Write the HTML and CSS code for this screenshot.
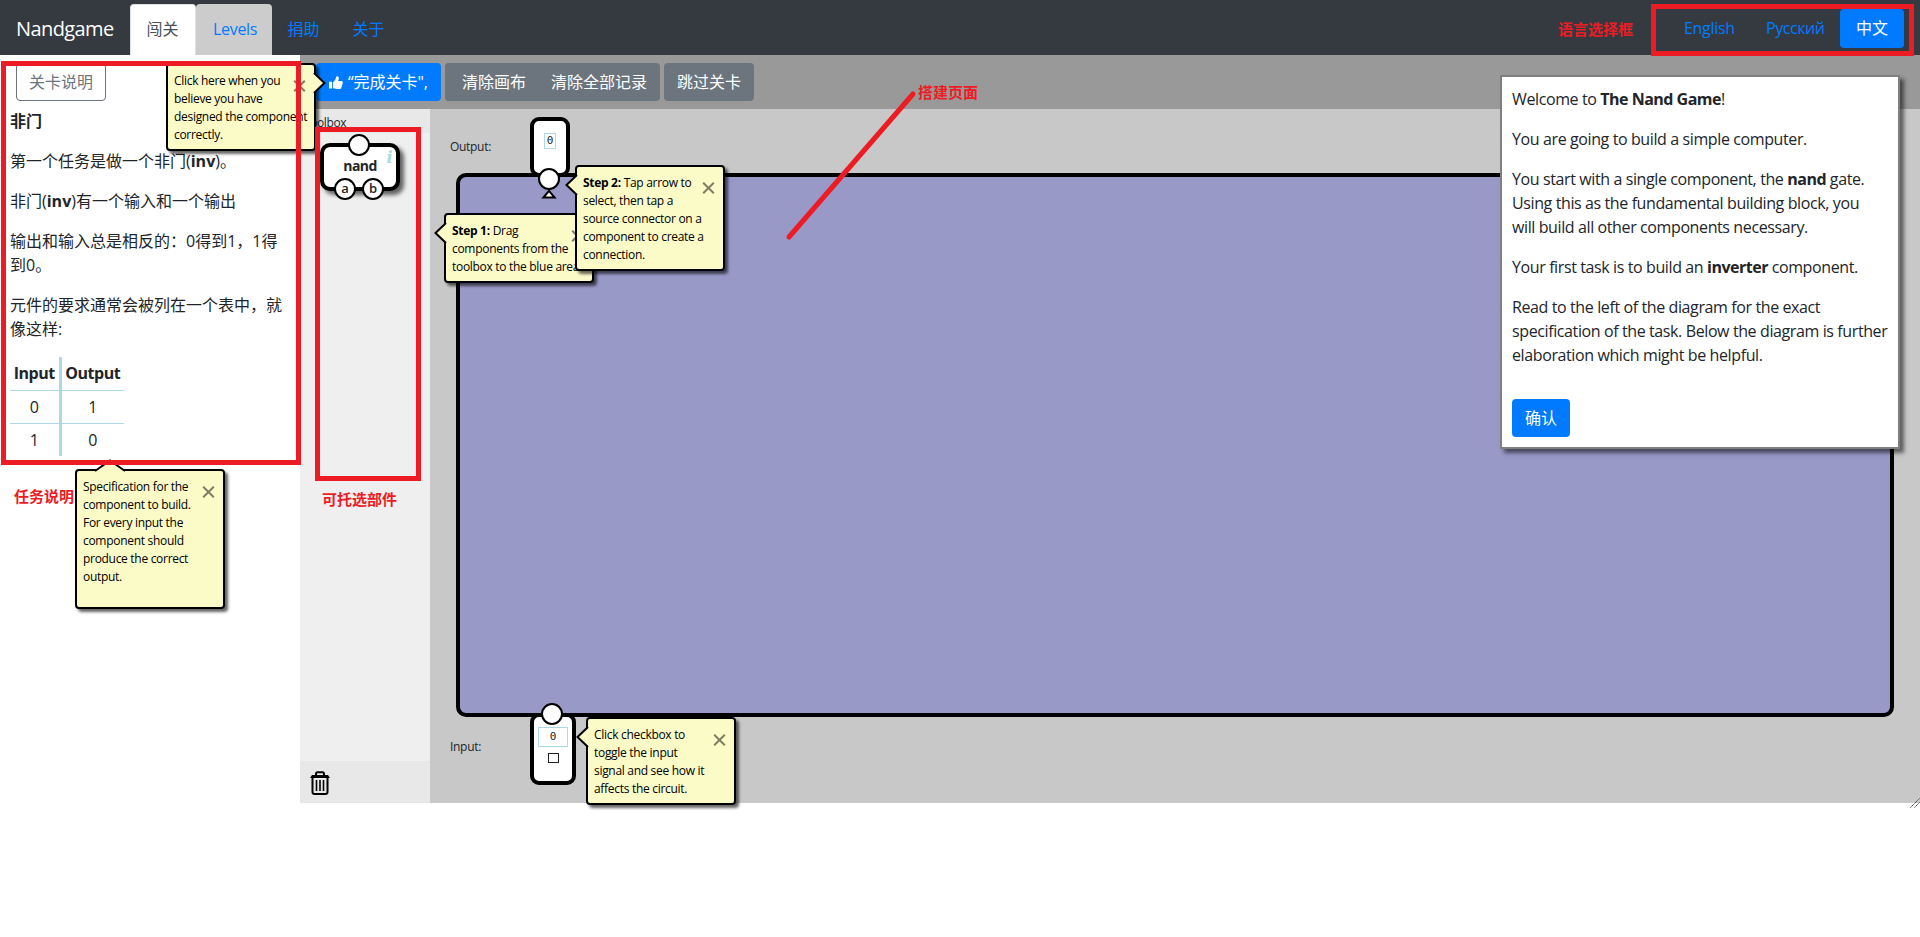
FILE: index.html
```html
<!DOCTYPE html>
<html lang="zh">
<head>
<meta charset="utf-8">
<title>Nandgame</title>
<link rel="stylesheet" href="styles.css">
</head>
<body>
<nav class="navbar">
  <div class="brand">Nandgame</div>
  <div class="tabs">
    <a class="tab tab-active">闯关</a>
    <a class="tab tab-levels">Levels</a>
    <a class="tab">捐助</a>
    <a class="tab">关于</a>
  </div>
  <div class="langs">
    <a class="lang">English</a>
    <a class="lang lang-ru">Русский</a>
    <a class="lang lang-active">中文</a>
  </div>
</nav>

<main class="main">
  <section class="spec">
    <button class="btn btn-outline">关卡说明</button>
    <h4 class="spec-title">非门</h4>
    <p>第一个任务是做一个非门(<b>inv</b>)。</p>
    <p>非门(<b>inv</b>)有一个输入和一个输出</p>
    <p>输出和输入总是相反的：0得到1，1得<br>到0。</p>
    <p>元件的要求通常会被列在一个表中，就<br>像这样:</p>
    <table class="truth">
      <tr><th>Input</th><th>Output</th></tr>
      <tr><td>0</td><td>1</td></tr>
      <tr><td>1</td><td>0</td></tr>
    </table>
  </section>

  <section class="game">
    <div class="toolbar">
      <button class="btn btn-primary btn-done"><svg class="thumb" viewBox="0 0 16 16"><path d="M0 7h3.6v8H0zM4.6 7.4C6 6.600 7.300 4.800 7.800 3.300 8.100 2.200 8 .8 9.300.8c1.500 0 2.200 1.200 2.100 2.600-.1 1.100-.7 2-.9 2.900H14c1.100 0 2 .8 2 1.800 0 .7-.3 1.200-.7 1.500.3.900.100 1.700-.5 2.200.1.800-.1 1.400-.6 1.900.1 1.200-.9 1.800-2.400 1.800-3.200 0-4.700-.9-7.200-1z"/></svg><span>“完成关卡",</span></button>
      <div class="group">
        <button class="btn btn-grey">清除画布</button>
        <button class="btn btn-grey">清除全部记录</button>
      </div>
      <button class="btn btn-grey">跳过关卡</button>
    </div>
    <div class="workspace">
      <aside class="toolbox">
        <div class="toolbox-head">Toolbox</div>
        <div class="toolbox-body">
          <div class="nand">
            <span class="pin pin-top"></span>
            nand
            <i class="info">i</i>
            <span class="pin pin-a">a</span>
            <span class="pin pin-b">b</span>
          </div>
        </div>
        <div class="trash">
          <svg viewBox="0 0 20 24" width="20" height="24"><g fill="none" stroke="#000" stroke-width="2"><path d="M6 4.500V2.800Q6 1.200 7.500 1.200h5q1.500 0 1.500 1.600v1.700"/><path d="M2.500 7v14q0 2 2 2h11q2 0 2-2V7"/><path d="M6.500 9v11M10 9v11M13.500 9v11" stroke-width="1.600"/></g><path d="M2 4h16l2 3H0z"/></svg>
        </div>
      </aside>
      <div class="diagram">
        <div class="row row-out">
          <span class="row-label">Output:</span>
          <div class="io io-out"><span class="bit bit-out">0</span><span class="pin io-pin"></span><svg class="arrow" viewBox="0 0 16 10"><path d="M8 1.800 13.600 8.500H2.400z" fill="#fff" stroke="#000" stroke-width="2"/></svg></div>
        </div>
        <div class="board"></div>
        <div class="row row-in">
          <span class="row-label">Input:</span>
          <div class="io io-in"><span class="bit bit-in">0</span><span class="check"></span><span class="pin io-pin"></span></div>
        </div>
      </div>
    </div>
    <svg class="resizer" viewBox="0 0 10 11"><path d="M.5 9.500 9.500.5M4.500 9.500 9.500 4.500" stroke="#333" stroke-width="1" stroke-dasharray="1.400 .6"/></svg>
  </section>
</main>

<div class="tip tip-done"><svg class="point point-right" viewBox="0 0 12 22"><path d="M0 1 10.500 11 0 21" /></svg><span class="close"></span>Click here when you<br>believe you have<br>designed the component<br>correctly.</div>
<div class="tip tip-drag"><svg class="point point-left" viewBox="0 0 12 22"><path d="M12 1 1.500 11 12 21" /></svg><span class="close"></span><b>Step 1:</b> Drag<br>components from the<br>toolbox to the blue area</div>
<div class="tip tip-tap"><svg class="point point-left" viewBox="0 0 12 22"><path d="M12 1 1.500 11 12 21" /></svg><span class="close"></span><b>Step 2:</b> Tap arrow to<br>select, then tap a<br>source connector on a<br>component to create a<br>connection.</div>
<div class="tip tip-spec"><svg class="point point-up" viewBox="0 0 30 12"><path d="M0 12 15 1.500 30 12" /></svg><span class="close"></span>Specification for the<br>component to build.<br>For every input the<br>component should<br>produce the correct<br>output.</div>
<div class="tip tip-toggle"><svg class="point point-left" viewBox="0 0 12 22"><path d="M12 1 1.500 11 12 21" /></svg><span class="close"></span>Click checkbox to<br>toggle the input<br>signal and see how it<br>affects the circuit.</div>

<div class="dialog">
  <p>Welcome to <b>The Nand Game</b>!</p>
  <p>You are going to build a simple computer.</p>
  <p>You start with a single component, the <b>nand</b> gate.<br>Using this as the fundamental building block, you<br>will build all other components necessary.</p>
  <p>Your first task is to build an <b>inverter</b> component.</p>
  <p>Read to the left of the diagram for the exact<br>specification of the task. Below the diagram is further<br>elaboration which might be helpful.</p>
  <button class="btn btn-primary btn-ok">确认</button>
</div>

<div class="mark mark-spec"></div>
<div class="mark mark-tools"></div>
<div class="mark mark-lang"></div>
<svg class="mark-line" viewBox="0 0 132 151"><path d="M4 147 128 4" stroke="#ed1c24" stroke-width="5" stroke-linecap="round"/></svg>
<div class="note note-spec">任务说明</div>
<div class="note note-tools">可托选部件</div>
<div class="note note-build">搭建页面</div>
<div class="note note-lang">语言选择框</div>
</body>
</html>
```
FILE: styles.css
```css
* { box-sizing: border-box; }
body {
  margin: 0;
  width: 1920px;
  height: 937px;
  position: relative;
  overflow: hidden;
  background: #fff;
  color: #212529;
  font: 16px/24px "Open Sans", "Noto Sans CJK SC", sans-serif;
  letter-spacing: -0.3px;
  white-space: nowrap;
}
b { font-weight: 700; }
p { margin: 0 0 16px; }

.navbar { display: flex; height: 55px; background: #343a40; }
.brand { width: 130px; padding: 14px 0 0 16px; font-size: 20px; line-height: 30px; color: #fff; letter-spacing: -0.6px; }
.tabs { display: flex; padding-top: 4px; }
.tab { height: 51px; padding: 12px 15.500px 0; border: 1px solid transparent; border-bottom: 0; border-radius: 4px 4px 0 0; color: #007bff; letter-spacing: 0; }
.tab-active { width: 66px; background: #fff; border-color: #dee2e6; color: #495057; }
.tab-levels { width: 76px; margin-right: -1px; background: #ccc; letter-spacing: -0.3px; padding-left: 16px; }
.langs { display: flex; margin-left: auto; padding: 9px 16px 0 0; color: #007bff; }
.lang { height: 39px; padding: 7px 0 0 16px; width: 82px; }
.lang-ru { width: 90px; letter-spacing: -0.45px; }
.lang-active { width: 64px; background: #007bff; color: #fff; border-radius: 4px; letter-spacing: 0; }

.main { display: flex; height: 748px; }
.spec { width: 300px; padding: 8px 0 0 10px; }
.spec p, .spec-title { letter-spacing: 0; }
.spec-title { margin: 8px 0 16px; font-size: 16px; line-height: 24px; font-weight: 700; }
.btn { height: 38px; padding: 0 13px; border: 0; border-radius: 4px; color: #fff; font: inherit; letter-spacing: 0; white-space: nowrap; }
.btn-outline { display: block; margin-left: 6px; width: 90px; padding: 0 12px; background: #fff; border: 1px solid #6c757d; color: #6c757d; }
.btn-primary { background: #007bff; }
.btn-grey { background: #6c757d; }
.truth { border-collapse: collapse; letter-spacing: -0.3px; text-align: center; }
.truth th, .truth td { height: 33px; padding: 0; border-top: 1px solid #add8e6; }
.truth th { border-top: 0; letter-spacing: -0.5px; }
.truth th:first-child, .truth td:first-child { width: 50px; border-right: 3px solid #add8e6; }
.truth th:last-child, .truth td:last-child { width: 64px; }

.game { width: 1620px; position: relative; }
.toolbar { display: flex; align-items: flex-start; gap: 4px; height: 54px; padding: 8px 0 0 16px; background: #999; }
.btn-done { display: flex; align-items: center; gap: 5px; width: 125px; }
.thumb { width: 15px; height: 15px; fill: #fff; }
.group { display: flex; width: 215px; background: #6c757d; border-radius: 4px; }
.group .btn { padding: 0 8px 0 17px; }
.workspace { display: flex; height: 694px; }
.toolbox { display: flex; flex-direction: column; width: 130px; background: #efefef; font-size: 12px; }
.toolbox-head { height: 24px; padding: 2px 4px 0; background: #e8e8e8; letter-spacing: -0.4px; }
.toolbox-body { flex: 1; padding: 10px 0 0 20px; }
.trash { height: 42px; padding: 10px 0 0 10px; background: #e8e8e8; }
.nand { position: relative; width: 80px; height: 48px; border: 4px solid #000; border-radius: 10px; background: #fff; box-shadow: 4px 4px 4px #0009; font-size: 14px; line-height: 38px; font-weight: 700; letter-spacing: -0.6px; text-align: center; }
.pin { position: absolute; width: 22px; height: 22px; border: 2px solid #000; border-radius: 50%; background: #fff; font-size: 13px; line-height: 17px; font-weight: 600; letter-spacing: 0; text-align: center; }
.pin-top { left: 24px; top: -13px; }
.pin-a { left: 10px; top: 31px; }
.pin-b { left: 38px; top: 31px; }
.info { position: absolute; right: 4px; top: 1px; font: italic 700 16px/20px "DejaVu Serif", serif; color: #add8e6; }
.diagram { display: flex; flex-direction: column; width: 1490px; background: #c8c8c8; font-size: 12px; }
.row { display: flex; padding-left: 20px; }
.row-label { width: 80px; line-height: 18px; }
.row-out { height: 64px; padding-top: 8px; }
.row-out .row-label { padding-top: 21px; }
.row-in { flex: 1; }
.row-in .row-label { padding-top: 21px; }
.board { width: 1438px; height: 544px; margin-left: 26px; border: 4px solid #000; border-radius: 10px; background: #9999c8; }
.io { position: relative; display: flex; flex-direction: column; align-items: center; border: 4px solid #000; border-radius: 9px; background: #fff; }
.io-out { width: 40px; height: 60px; padding-top: 12px; margin-bottom: -10px; }
.io-in { width: 46px; height: 72px; margin-top: -4px; padding-top: 10px; }
.io-pin { left: 4px; top: 47px; }
.io-in .io-pin { left: 7px; top: -14px; }
.arrow { position: absolute; left: 7px; top: 68px; width: 16px; height: 10px; }
.bit { border: 1px solid #add8e6; font: 11px/14px "DejaVu Sans Mono", monospace; text-align: center; letter-spacing: 0; }
.bit-out { width: 12px; height: 16px; }
.bit-in { width: 30px; height: 20px; line-height: 18px; }
.check { width: 11px; height: 10px; margin-top: 6px; border: 1px solid #222; }
.resizer { position: absolute; right: 0; bottom: -6px; width: 10px; height: 11px; }

.tip { position: absolute; width: 150px; padding: 7px 6px; border: 2px solid #000; border-radius: 4px; background: #fbfbc8; box-shadow: 3px 3px 3px #0009; color: #000; font-size: 12px; line-height: 18px; letter-spacing: -0.3px; }
.point { position: absolute; overflow: visible; fill: #fbfbc8; stroke: #000; stroke-width: 2; }
.point-right { right: -12px; top: 7px; width: 12px; height: 22px; }
.point-left { left: -12px; top: 7px; width: 12px; height: 22px; }
.point-up { left: 18px; top: -12px; width: 30px; height: 12px; }
.close { position: absolute; left: 126px; top: 15px; width: 11px; height: 11px; }
.close::before, .close::after { content: ""; position: absolute; left: -2px; top: 4.500px; width: 15px; height: 2px; background: #7e7e66; transform: rotate(45deg); }
.close::after { transform: rotate(-45deg); }
.tip-done { left: 166px; top: 63px; height: 88px; }
.tip-drag { left: 444px; top: 213px; height: 70px; }
.tip-tap { left: 575px; top: 165px; height: 106px; }
.tip-spec { left: 75px; top: 469px; height: 140px; }
.tip-toggle { left: 586px; top: 717px; height: 88px; }

.dialog { position: absolute; left: 1500px; top: 75px; width: 400px; height: 374px; padding: 10px 10px; border: 2px solid #808080; background: #fff; box-shadow: 4px 4px 4px #0008; letter-spacing: -0.39px; }
.dialog b { letter-spacing: -0.5px; }
.btn-ok { width: 58px; margin-top: 16px; }

.mark { position: absolute; border: 5px solid #ed1c24; }
.mark-spec { left: 1px; top: 61px; width: 300px; height: 404px; }
.mark-tools { left: 315px; top: 127px; width: 106px; height: 354px; }
.mark-lang { left: 1651px; top: 4px; width: 263px; height: 52px; }
.mark-line { position: absolute; left: 785px; top: 90px; width: 132px; height: 151px; }
.note { position: absolute; color: #ed1c24; font-size: 15px; line-height: 20px; font-weight: 700; letter-spacing: 0; }
.note-spec { left: 14px; top: 486px; }
.note-tools { left: 322px; top: 489px; }
.note-build { left: 918px; top: 82px; }
.note-lang { left: 1558px; top: 19px; }
```
